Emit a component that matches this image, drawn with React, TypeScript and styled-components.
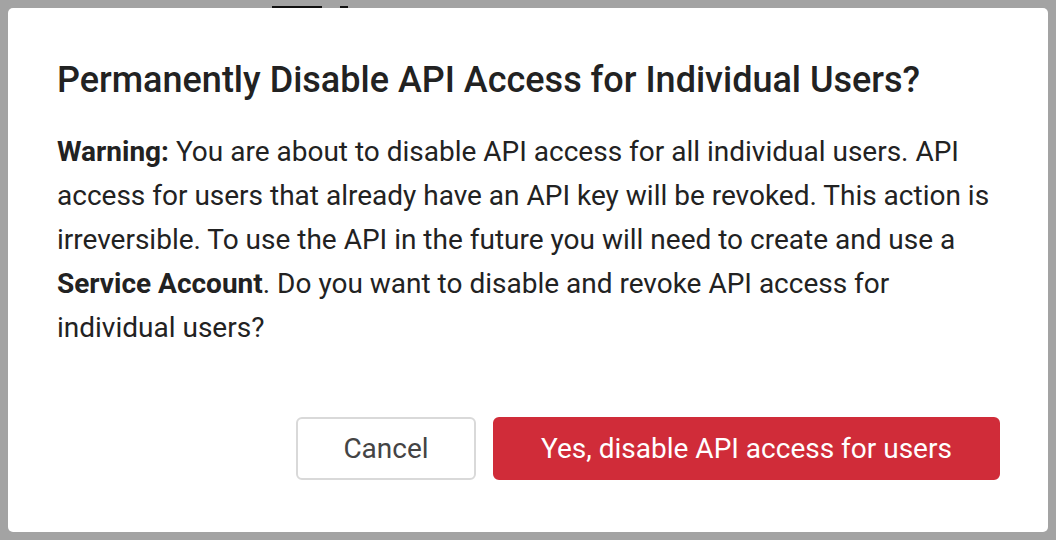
import React from 'react';
import styled, { createGlobalStyle } from 'styled-components';

const GlobalStyle = createGlobalStyle`
  html, body {
    margin: 0;
    padding: 0;
    background: #a3a3a3;
    font-family: Roboto, "Liberation Sans", Arial, sans-serif;
  }
`;

const Backdrop = styled.div`
  position: relative;
  width: 1056px;
  height: 540px;
  box-sizing: border-box;
  padding: 8px;
  background: #a3a3a3;
`;

const PeekBar = styled.div<{ $left: number; $width: number }>`
  position: absolute;
  top: 6px;
  left: ${(p) => p.$left}px;
  width: ${(p) => p.$width}px;
  height: 2px;
  background: #111;
`;

const Dialog = styled.div`
  position: relative;
  width: 1040px;
  height: 524px;
  box-sizing: border-box;
  background: #fff;
  border-radius: 5px;
  padding: 51px 48px 52px 49px;
  display: flex;
  flex-direction: column;
`;

const Title = styled.h2`
  margin: 0;
  font-size: 36px;
  line-height: 42px;
  font-weight: 500;
  color: #222;
`;

const Body = styled.p`
  margin: 29px 0 0;
  font-size: 28px;
  line-height: 44px;
  color: #222;

  strong {
    font-weight: 700;
  }
`;

const Footer = styled.div`
  margin-top: auto;
  display: flex;
  justify-content: flex-end;
  gap: 17px;
`;

const Button = styled.button<{ $danger?: boolean }>`
  height: 63px;
  box-sizing: border-box;
  padding: 0 24px;
  min-width: ${(p) => (p.$danger ? 507 : 180)}px;
  border-radius: 6px;
  font-family: Roboto, "Liberation Sans", Arial, sans-serif;
  font-size: 28px;
  font-weight: 400;
  cursor: pointer;
  border: 2px solid ${(p) => (p.$danger ? '#d02c39' : '#d9d9d9')};
  background: ${(p) => (p.$danger ? '#d02c39' : '#fff')};
  color: ${(p) => (p.$danger ? '#fff' : '#444')};
`;

export default function App() {
  return (
    <>
      <GlobalStyle />
      <Backdrop>
        <PeekBar $left={272} $width={50} />
        <PeekBar $left={340} $width={8} />
        <Dialog>
          <Title>Permanently Disable API Access for Individual Users?</Title>
          <Body>
            <strong>Warning:</strong> You are about to disable API access for all individual users. API
            access for users that already have an API key will be revoked. This action is
            irreversible. To use the API in the future you will need to create and use a{' '}
            <strong>Service Account</strong>. Do you want to disable and revoke API access for
            individual users?
          </Body>
          <Footer>
            <Button>Cancel</Button>
            <Button $danger>Yes, disable API access for users</Button>
          </Footer>
        </Dialog>
      </Backdrop>
    </>
  );
}
